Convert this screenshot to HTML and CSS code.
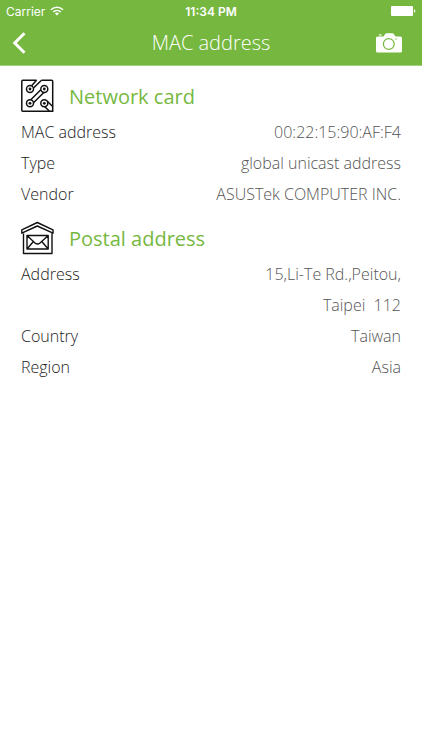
FILE: index.html
```html
<!DOCTYPE html>
<html lang="en">
<head>
<meta charset="utf-8">
<meta name="viewport" content="width=device-width, initial-scale=1">
<title>MAC address</title>
<link rel="stylesheet" href="styles.css">
</head>
<body>
<header class="header">
  <div class="status">
    <div class="carrier">
      <span>Carrier</span>
      <svg width="14" height="10" viewBox="0 0 14 10" fill="none" stroke="#fff" stroke-width="1.6" aria-hidden="true">
        <path d="M1 3.7a8.6 8.6 0 0 1 12 0M3.2 6a5.5 5.5 0 0 1 7.6 0"/>
        <path d="M7 9.6 4.9 7.5a3 3 0 0 1 4.2 0z" fill="#fff" stroke="none"/>
      </svg>
    </div>
    <time class="clock">11:34 PM</time>
    <svg class="battery" width="25" height="10" viewBox="0 0 25 10" fill="#fff" aria-hidden="true">
      <rect width="22" height="10" rx="1"/><path d="M23 3.2q1.4.6 1.4 1.8T23 6.800z"/>
    </svg>
  </div>
  <nav class="nav">
    <button class="icon-button" type="button" aria-label="Back">
      <svg width="14" height="22" viewBox="0 0 14 22" fill="none" stroke="#fff" stroke-width="3" aria-hidden="true"><path d="M12.500 1.200 2.700 11l9.800 9.800"/></svg>
    </button>
    <h1 class="title">MAC address</h1>
    <button class="icon-button icon-button-end" type="button" aria-label="Camera">
      <svg width="26" height="20" viewBox="0 0 26 20" aria-hidden="true">
        <path fill="#fff" d="M1.500 3.500H7.500L9.300 1Q9.800.3 10.500.3h6q.7 0 1.200.6l1.800 2.600h5q1.500 0 1.500 1.500v13q0 1.500-1.500 1.500h-23Q0 19.500 0 18V5q0-1.500 1.500-1.500z"/>
        <path fill="#fff" d="M3 1.300h2.500v1.200H3z"/>
        <circle cx="12.800" cy="11" r="5.400" fill="none" stroke="#76b83f" stroke-width="1.200"/>
        <circle cx="20" cy="6" r=".7" fill="#76b83f"/>
      </svg>
    </button>
  </nav>
</header>
<main class="content">
  <section class="group">
    <h2 class="heading">
      <svg width="34" height="34" viewBox="0 0 34 34" fill="none" stroke="#111" stroke-width="1.500" aria-hidden="true">
        <path d="M15.500 1.300H1.800q-1 0-1 1v29q0 1 1 1H28.500M20.500 1.300h10.200q1 0 1 1V27.500"/>
        <path d="M10.600 6.700 15.500 1.300M12.500 9 20.500 1.300M19.800 10.800 9.800 20.800M22.800 13.500 12.500 23.800M26 22 31.700 27.500v4.800H28.500L22.500 26.500"/>
        <circle cx="9" cy="10" r="3.500" fill="#fff"/><circle cx="23.300" cy="10" r="3.500" fill="#fff"/><circle cx="9" cy="24.300" r="3.500" fill="#fff"/><circle cx="23.300" cy="24.300" r="3.500" fill="#fff"/>
        <g fill="#111" stroke="none"><circle cx="9" cy="10" r="1.400"/><circle cx="23.300" cy="10" r="1.400"/><circle cx="9" cy="24.300" r="1.400"/><circle cx="23.300" cy="24.300" r="1.400"/></g>
      </svg>
      <span>Network card</span>
    </h2>
    <dl class="rows">
      <div class="row"><dt>MAC address</dt><dd>00:22:15:90:AF:F4</dd></div>
      <div class="row"><dt>Type</dt><dd>global unicast address</dd></div>
      <div class="row"><dt>Vendor</dt><dd>ASUSTek COMPUTER INC.</dd></div>
    </dl>
  </section>
  <section class="group">
    <h2 class="heading">
      <svg width="34" height="34" viewBox="0 0 34 34" fill="none" stroke="#111" stroke-width="1.400" stroke-linejoin="round" aria-hidden="true">
        <path d="M2.500 12.500v20h28.500v-20M.8 8.800 16.300 1.500l15.700 7.300v3.400L16.300 5 .8 12.200z"/>
        <path d="M6 14.500h21.200v13.500H6zM6 14.500l8 7.500q2.500 2 5 0l8.200-7.500M6 28l6-7M27.200 28l-6-7"/>
      </svg>
      <span>Postal address</span>
    </h2>
    <dl class="rows">
      <div class="row"><dt>Address</dt><dd>15,Li-Te Rd.,Peitou,<br>Taipei&nbsp; 112</dd></div>
      <div class="row"><dt>Country</dt><dd>Taiwan</dd></div>
      <div class="row"><dt>Region</dt><dd>Asia</dd></div>
    </dl>
  </section>
</main>
</body>
</html>
```
FILE: styles.css
```css
* {
  box-sizing: border-box;
}

body {
  margin: 0;
  background: #fff;
  font-family: "Open Sans", sans-serif;
  font-weight: 300;
}

h1, h2, dl, dd {
  margin: 0;
  font-weight: 300;
}

.header {
  background: #76b83f;
  color: #fff;
  border-bottom: 1px solid #a3cf7f;
}

.status {
  display: grid;
  grid-template-columns: 1fr auto 1fr;
  align-items: center;
  height: 22px;
  padding: 0 6px;
  font-family: Inter, sans-serif;
  font-size: 12px;
  font-weight: 400;
}

.carrier {
  display: flex;
  align-items: center;
  gap: 5px;
}

.clock {
  font-weight: 600;
}

.battery {
  justify-self: end;
}

.nav {
  display: grid;
  grid-template-columns: 1fr auto 1fr;
  align-items: center;
  height: 43px;
  padding: 0 12px 2px;
}

.title {
  font-size: 20px;
  line-height: 40px;
}

.icon-button {
  display: flex;
  justify-self: start;
  padding: 0;
  border: 0;
  background: none;
  cursor: pointer;
}

.icon-button-end {
  justify-self: end;
  padding-right: 8px;
}

.content {
  display: flex;
  flex-direction: column;
  gap: 11px;
  padding: 13px 21px;
}

.heading {
  display: flex;
  align-items: center;
  gap: 14px;
  height: 34px;
  color: #76b83f;
  font-size: 20px;
  font-weight: 400;
}

.rows {
  padding-top: 4px;
}

.row {
  display: flex;
  justify-content: space-between;
  gap: 16px;
  font-size: 16px;
  line-height: 31px;
}

.row dt {
  color: #222;
}

.row dd {
  color: #555;
  text-align: right;
}
```
